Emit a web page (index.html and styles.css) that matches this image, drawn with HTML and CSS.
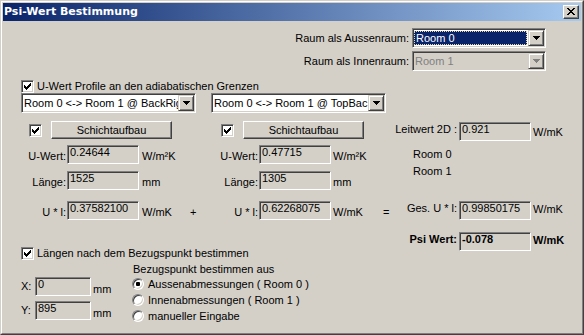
FILE: index.html
```html
<!DOCTYPE html>
<html lang="de">
<head>
<meta charset="utf-8">
<title>Psi-Wert Bestimmung</title>
<link rel="stylesheet" href="styles.css">
</head>
<body>
<div class="window">
  <div class="frame">
    <div class="titlebar">
      <span class="title">Psi-Wert Bestimmung</span>
      <span class="close-btn"><svg width="8" height="7" viewBox="0 0 8 7" shape-rendering="crispEdges"><path d="M0 0h2v1h-2zM6 0h2v1h-2zM1 1h2v1h-2zM5 1h2v1h-2zM2 2h4v1h-4zM3 3h2v1h-2zM2 4h4v1h-4zM1 5h2v1h-2zM5 5h2v1h-2zM0 6h2v1h-2zM6 6h2v1h-2z"/></svg></span>
    </div>
    <div class="client">
      <div class="room-row room-row-outer">
        <span class="room-label">Raum als Aussenraum:</span>
        <div class="combo combo-room">
          <span class="combo-text is-selected">Room 0</span>
          <span class="combo-btn"><svg class="arrow" width="7" height="4" viewBox="0 0 7 4" shape-rendering="crispEdges"><path d="M0 0h7v1h-1v1h-1v1h-1v1h-1v-1h-1v-1h-1v-1h-1z"/></svg></span>
        </div>
      </div>
      <div class="room-row room-row-inner">
        <span class="room-label">Raum als Innenraum:</span>
        <div class="combo combo-room is-disabled">
          <span class="combo-text">Room 1</span>
          <span class="combo-btn"><svg class="arrow" width="7" height="4" viewBox="0 0 7 4" shape-rendering="crispEdges"><path d="M0 0h7v1h-1v1h-1v1h-1v1h-1v-1h-1v-1h-1v-1h-1z"/></svg></span>
        </div>
      </div>

      <div class="check-row profile-check">
        <span class="checkbox"><svg width="7" height="7" viewBox="0 0 7 7" shape-rendering="crispEdges"><path d="M0 2h1v3h-1zM1 3h1v3h-1zM2 4h1v3h-1zM3 3h1v3h-1zM4 2h1v3h-1zM5 1h1v3h-1zM6 0h1v3h-1z"/></svg></span>
        <span class="check-text">U-Wert Profile an den adiabatischen Grenzen</span>
      </div>

      <div class="main">
        <div class="left-area">
          <div class="panels">
            <div class="panel panel-a">
              <div class="combo combo-profile">
                <span class="combo-text">Room 0 &lt;-&gt; Room 1 @ BackRig</span>
                <span class="combo-btn"><svg class="arrow" width="7" height="4" viewBox="0 0 7 4" shape-rendering="crispEdges"><path d="M0 0h7v1h-1v1h-1v1h-1v1h-1v-1h-1v-1h-1v-1h-1z"/></svg></span>
              </div>
              <div class="tool-row">
                <span class="checkbox"><svg width="7" height="7" viewBox="0 0 7 7" shape-rendering="crispEdges"><path d="M0 2h1v3h-1zM1 3h1v3h-1zM2 4h1v3h-1zM3 3h1v3h-1zM4 2h1v3h-1zM5 1h1v3h-1zM6 0h1v3h-1z"/></svg></span>
                <span class="button">Schichtaufbau</span>
              </div>
              <div class="field-row row-u">
                <span class="field-label">U-Wert:</span><span class="edit">0.24644</span><span class="unit">W/m²K</span>
              </div>
              <div class="field-row row-l">
                <span class="field-label">Länge:</span><span class="edit">1525</span><span class="unit">mm</span>
              </div>
              <div class="field-row row-ul">
                <span class="field-label">U * l:</span><span class="edit">0.37582100</span><span class="unit">W/mK</span><span class="op op-plus">+</span>
              </div>
            </div>
            <div class="panel panel-b">
              <div class="combo combo-profile">
                <span class="combo-text">Room 0 &lt;-&gt; Room 1 @ TopBac</span>
                <span class="combo-btn"><svg class="arrow" width="7" height="4" viewBox="0 0 7 4" shape-rendering="crispEdges"><path d="M0 0h7v1h-1v1h-1v1h-1v1h-1v-1h-1v-1h-1v-1h-1z"/></svg></span>
              </div>
              <div class="tool-row">
                <span class="checkbox"><svg width="7" height="7" viewBox="0 0 7 7" shape-rendering="crispEdges"><path d="M0 2h1v3h-1zM1 3h1v3h-1zM2 4h1v3h-1zM3 3h1v3h-1zM4 2h1v3h-1zM5 1h1v3h-1zM6 0h1v3h-1z"/></svg></span>
                <span class="button">Schichtaufbau</span>
              </div>
              <div class="field-row row-u">
                <span class="field-label">U-Wert:</span><span class="edit">0.47715</span><span class="unit">W/m²K</span>
              </div>
              <div class="field-row row-l">
                <span class="field-label">Länge:</span><span class="edit">1305</span><span class="unit">mm</span>
              </div>
              <div class="field-row row-ul">
                <span class="field-label">U * l:</span><span class="edit">0.62268075</span><span class="unit">W/mK</span><span class="op op-eq">=</span>
              </div>
            </div>
          </div>

          <div class="check-row length-check">
            <span class="checkbox"><svg width="7" height="7" viewBox="0 0 7 7" shape-rendering="crispEdges"><path d="M0 2h1v3h-1zM1 3h1v3h-1zM2 4h1v3h-1zM3 3h1v3h-1zM4 2h1v3h-1zM5 1h1v3h-1zM6 0h1v3h-1z"/></svg></span>
            <span class="check-text">Längen nach dem Bezugspunkt bestimmen</span>
          </div>

          <div class="ref-section">
            <div class="coords">
              <div class="coord-row coord-x">
                <span class="coord-label">X:</span><span class="edit edit-coord">0</span><span class="unit">mm</span>
              </div>
              <div class="coord-row coord-y">
                <span class="coord-label">Y:</span><span class="edit edit-coord">895</span><span class="unit">mm</span>
              </div>
            </div>
            <div class="ref-options">
              <div class="ref-caption">Bezugspunkt bestimmen aus</div>
              <div class="radio-row"><span class="radio is-checked"></span><span>Aussenabmessungen ( Room 0 )</span></div>
              <div class="radio-row"><span class="radio"></span><span>Innenabmessungen ( Room 1 )</span></div>
              <div class="radio-row"><span class="radio"></span><span>manueller Eingabe</span></div>
            </div>
          </div>
        </div>

        <div class="summary">
          <div class="sum-row row-leit">
            <span class="sum-label">Leitwert 2D :</span><span class="edit">0.921</span><span class="unit">W/mK</span>
          </div>
          <div class="room-name room-name-0">Room 0</div>
          <div class="room-name room-name-1">Room 1</div>
          <div class="sum-row row-ges">
            <span class="sum-label">Ges. U * l:</span><span class="edit">0.99850175</span><span class="unit">W/mK</span>
          </div>
          <div class="sum-row row-psi">
            <span class="sum-label">Psi Wert:</span><span class="edit">-0.078</span><span class="unit">W/mK</span>
          </div>
        </div>
      </div>
    </div>
  </div>
</div>
</body>
</html>
```

FILE: styles.css
```css
* { box-sizing: border-box; }

html, body {
  margin: 0;
  padding: 0;
}

body {
  width: 584px;
  height: 335px;
  overflow: hidden;
  background: #d4d0c8;
  color: #000;
  font-family: "Liberation Sans", Arial, sans-serif;
  font-size: 11px;
  line-height: 13px;
}

/* ---------- window frame ---------- */
.window {
  width: 584px;
  height: 335px;
  border: 1px solid;
  border-color: #d4d0c8 #404040 #404040 #d4d0c8;
  background: #d4d0c8;
}

.frame {
  height: 100%;
  border: 1px solid;
  border-color: #fff #808080 #808080 #fff;
  padding: 1px;
  display: flex;
  flex-direction: column;
}

.titlebar {
  flex: none;
  height: 18px;
  display: flex;
  align-items: center;
  padding: 0 2px 0 1px;
  background: linear-gradient(to right, #0a246a, #a6caf0);
}

.title {
  flex: 1;
  color: #fff;
  font-family: "DejaVu Sans", Verdana, sans-serif;
  font-weight: bold;
  font-size: 11px;
  line-height: 18px;
  white-space: nowrap;
}

.close-btn {
  width: 16px;
  height: 14px;
  display: flex;
  align-items: center;
  justify-content: center;
  background: #d4d0c8;
  border: 1px solid;
  border-color: #fff #404040 #404040 #fff;
  box-shadow: inset -1px -1px #808080, inset 1px 1px #d4d0c8;
}

.close-btn svg { display: block; fill: #000; margin-top: -1px; }

.client {
  flex: 1;
  position: relative;
}

/* ---------- generic controls ---------- */
.combo {
  display: flex;
  height: 20px;
  background: #fff;
  border: 1px solid;
  border-color: #808080 #fff #fff #808080;
  box-shadow: inset 1px 1px #404040, inset -1px -1px #d4d0c8;
  padding: 1px;
}

.combo-text {
  flex: 1;
  min-width: 0;
  overflow: hidden;
  white-space: nowrap;
  padding-left: 1px;
  line-height: 16px;
}

.combo-text.is-selected {
  margin: 1px 1px 1px 0;
  padding-left: 1px;
  line-height: 12px;
  background: #0a246a;
  color: #fff;
  border: 1px dotted #e8dca0;
}

.combo-btn {
  flex: none;
  width: 16px;
  height: 16px;
  display: flex;
  align-items: center;
  justify-content: center;
  background: #d4d0c8;
  border: 1px solid;
  border-color: #d4d0c8 #404040 #404040 #d4d0c8;
  box-shadow: inset 1px 1px #fff, inset -1px -1px #808080;
}

.arrow { display: block; fill: #000; }

.combo.is-disabled { background: #d4d0c8; }
.combo.is-disabled .combo-text { color: #808080; }
.combo.is-disabled .arrow { fill: #808080; }

.checkbox {
  flex: none;
  width: 13px;
  height: 13px;
  display: flex;
  align-items: center;
  justify-content: center;
  background: #fff;
  border: 1px solid;
  border-color: #808080 #fff #fff #808080;
  box-shadow: inset 1px 1px #404040, inset -1px -1px #d4d0c8;
}

.checkbox svg { display: block; fill: #000; }

.button {
  display: flex;
  align-items: center;
  justify-content: center;
  height: 18px;
  background: #d4d0c8;
  border: 1px solid;
  border-color: #fff #404040 #404040 #fff;
  box-shadow: inset -1px -1px #808080, inset 1px 1px #d4d0c8;
}

.edit {
  flex: none;
  display: block;
  width: 72px;
  height: 19px;
  padding: 0 0 0 2px;
  line-height: 13px;
  white-space: nowrap;
  overflow: hidden;
  background: #d4d0c8;
  border: 1px solid;
  border-color: #808080 #fff #fff #808080;
  box-shadow: inset 1px 1px #404040, inset -1px -1px #d4d0c8;
}

.radio {
  flex: none;
  position: relative;
  width: 12px;
  height: 12px;
  border-radius: 50%;
  background: #fff;
  border: 1px solid;
  border-color: #808080 #fff #fff #808080;
  box-shadow: inset 1px 1px #404040, inset -1px -1px #d4d0c8;
}

.radio.is-checked::after {
  content: "";
  position: absolute;
  left: 3px;
  top: 3px;
  width: 4px;
  height: 4px;
  border-radius: 1px;
  background: #000;
}

/* ---------- top room selectors ---------- */
.room-row {
  display: flex;
  justify-content: flex-end;
  align-items: center;
  padding-right: 35px;
  height: 20px;
}

.room-row-outer { margin-top: 7px; }
.room-row-inner { margin-top: 3px; }

.room-label {
  margin-right: 3px;
  padding-top: 1px;
  white-space: nowrap;
}

.combo-room { width: 134px; }

/* ---------- check rows ---------- */
.check-row {
  display: flex;
  align-items: center;
  height: 13px;
  white-space: nowrap;
}

.check-text { margin-left: 3px; }

.profile-check {
  margin-top: 9px;
  padding-left: 18px;
}

/* ---------- main area ---------- */
.main {
  display: flex;
  align-items: flex-start;
  padding-left: 18px;
}

.left-area {
  flex: none;
  width: 369px;
}

.panels { display: flex; }

.panel { flex: none; }
.panel-a { width: 190px; }
.panel-b { width: 179px; }

.combo-profile { width: 175px; }

.tool-row {
  display: flex;
  align-items: center;
  height: 18px;
  margin-top: 8px;
}

.panel-a .tool-row { padding-left: 8px; }
.panel-b .tool-row { padding-left: 10px; }

.tool-row .button {
  width: 121px;
  margin-left: 9px;
}

.field-row {
  display: flex;
  align-items: flex-start;
  height: 19px;
  white-space: nowrap;
}

.row-u { margin-top: 6px; }
.row-l { margin-top: 7px; }
.row-ul { margin-top: 11px; }

.field-label {
  flex: none;
  text-align: right;
  padding-right: 1px;
  padding-top: 5px;
}

.panel-a .field-label { width: 46px; }
.panel-b .field-label { width: 48px; }

.unit {
  flex: none;
  padding-top: 5px;
  margin-left: 3px;
}

.panel .unit { width: 40px; }
.panel-b .unit { margin-left: 2px; }

.op { padding-top: 5px; }
.op-plus { margin-left: 8px; }
.op-eq { margin-left: 10px; }

/* ---------- summary column ---------- */
.summary {
  flex: none;
  width: 191px;
  margin-top: 29px;
}

.sum-row {
  display: flex;
  align-items: flex-start;
  height: 19px;
  white-space: nowrap;
}

.sum-label {
  flex: none;
  width: 69px;
  text-align: right;
  padding-right: 2px;
  padding-top: 1px;
}

.sum-row .unit { margin-left: 2px; }

.row-leit .unit { padding-top: 4px; }

.room-name {
  padding-left: 23px;
  height: 13px;
}

.room-name-0 { margin-top: 7px; }
.room-name-1 { margin-top: 4px; }

.row-ges { margin-top: 23px; }
.row-ges .unit { padding-top: 2px; }

.row-psi { margin-top: 12px; font-weight: bold; }
.row-psi .unit { padding-top: 2px; }

/* ---------- reference point section ---------- */
.length-check { margin-top: 27px; }

.ref-section {
  display: flex;
  align-items: flex-start;
}

.coords {
  flex: none;
  width: 111px;
}

.coord-row {
  display: flex;
  align-items: flex-start;
  height: 19px;
}

.coord-x { margin-top: 17px; }
.coord-y { margin-top: 5px; }

.coord-label {
  flex: none;
  width: 14px;
  padding-top: 3px;
}

.edit-coord { width: 56px; }

.coord-row .unit {
  margin-left: 2px;
  padding-top: 6px;
}

.ref-options { flex: none; }

.ref-caption {
  margin-top: 3px;
  margin-left: 1px;
  white-space: nowrap;
}

.radio-row {
  display: flex;
  align-items: center;
  height: 16px;
  white-space: nowrap;
}

.radio-row .radio { margin-right: 4px; }
```
